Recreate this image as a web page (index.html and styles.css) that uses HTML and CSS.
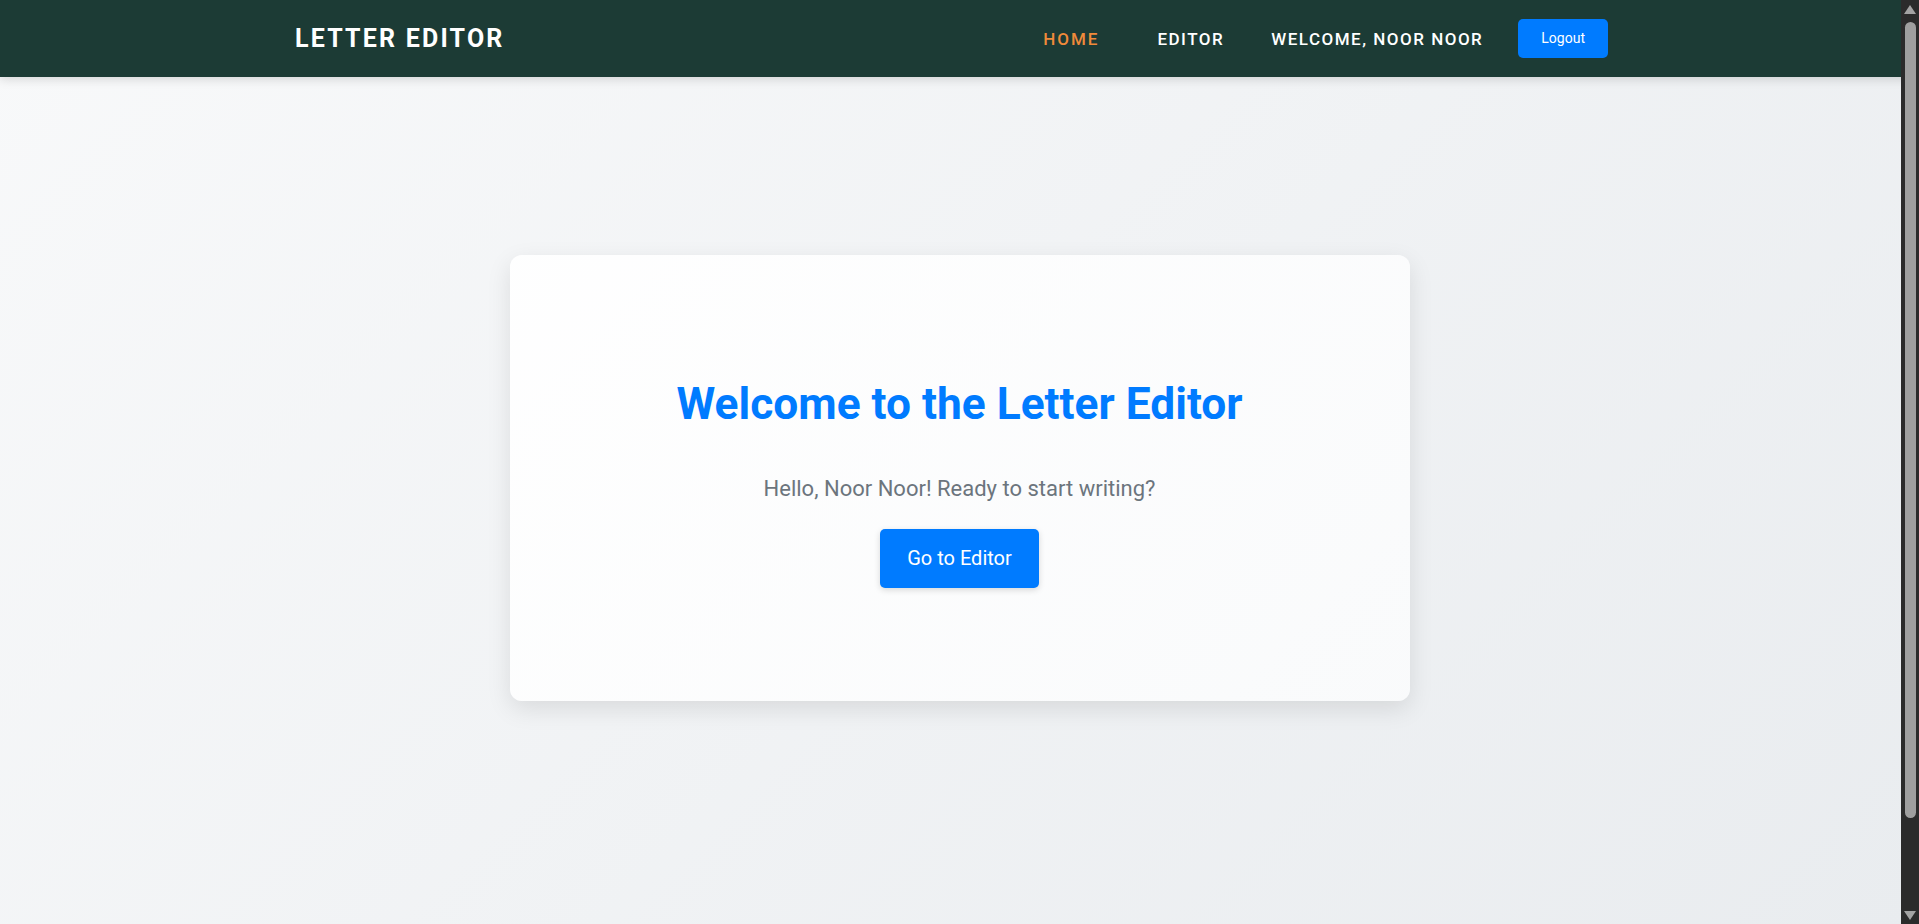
FILE: index.html
```html
<!DOCTYPE html>
<html lang="en">
<head>
<meta charset="utf-8">
<title>Letter Editor</title>
<link rel="stylesheet" href="styles.css">
</head>
<body>
<header class="navbar">
  <div class="nav-container">
    <a class="brand" href="#">LETTER EDITOR</a>
    <nav class="nav-links">
      <a class="nav-link active" href="#">HOME</a>
      <a class="nav-link" href="#">EDITOR</a>
      <span class="nav-welcome">WELCOME, NOOR NOOR</span>
      <button class="logout-btn" type="button">Logout</button>
    </nav>
  </div>
</header>
<main class="hero">
  <section class="card">
    <h1 class="card-title">Welcome to the Letter Editor</h1>
    <p class="card-text">Hello, Noor Noor! Ready to start writing?</p>
    <button class="primary-btn" type="button">Go to Editor</button>
  </section>
</main>
<div class="fake-scrollbar" aria-hidden="true">
  <span class="sb-arrow sb-up"></span>
  <span class="sb-thumb"></span>
  <span class="sb-arrow sb-down"></span>
</div>
</body>
</html>
```

FILE: styles.css
```css
html {
  background: #eef0f3;
}

body {
  margin: 0;
  font-family: Roboto, "Liberation Sans", Arial, sans-serif;
  background: linear-gradient(135deg, #f8f9fa 0%, #e9ecef 100%);
  min-height: 100vh;
  overflow: hidden;
}

.navbar {
  background: #1c3b35;
  height: 77px;
  padding-right: 18px;
  box-shadow: 0 2px 10px rgba(0, 0, 0, 0.15);
  position: relative;
  z-index: 2;
}

.nav-container {
  max-width: 1315px;
  height: 100%;
  margin: 0 auto;
  display: flex;
  align-items: center;
  justify-content: space-between;
}

.brand {
  color: #ffffff;
  text-decoration: none;
  font-size: 25px;
  font-weight: 700;
  letter-spacing: 2.2px;
  padding-left: 2px;
}

.nav-links {
  display: flex;
  align-items: center;
}

.nav-link,
.nav-welcome {
  color: #ffffff;
  text-decoration: none;
  font-size: 17px;
  font-weight: 500;
  letter-spacing: 1.5px;
}

.nav-link.active {
  color: #f08a3a;
  letter-spacing: 2px;
}

.nav-link + .nav-link {
  margin-left: 58px;
}

.nav-welcome {
  margin-left: 47px;
}

.logout-btn {
  margin-left: 35px;
  background: #007bff;
  color: #ffffff;
  border: none;
  border-radius: 5px;
  font-family: Roboto, "Liberation Sans", Arial, sans-serif;
  font-size: 14px;
  line-height: 17px;
  padding: 11px 23px;
  cursor: pointer;
}

.hero {
  padding-top: 178px;
  display: flex;
  justify-content: center;
}

.card {
  width: 900px;
  box-sizing: border-box;
  padding: 121px 40px 113px;
  background: linear-gradient(135deg, rgba(255, 255, 255, 0.95), rgba(250, 251, 252, 0.95));
  border-radius: 12px;
  box-shadow: 0 8px 24px rgba(0, 0, 0, 0.1);
  display: flex;
  flex-direction: column;
  align-items: center;
  text-align: center;
}

.card-title {
  margin: 0;
  color: #007bff;
  font-size: 44.3px;
  line-height: 57px;
  font-weight: 700;
}

.card-text {
  margin: 41px 0 0;
  color: #6c757d;
  font-size: 22px;
  line-height: 30px;
}

.primary-btn {
  margin-top: 25px;
  background: #007bff;
  color: #ffffff;
  border: none;
  border-radius: 5px;
  font-family: Roboto, "Liberation Sans", Arial, sans-serif;
  font-size: 20px;
  font-weight: 400;
  line-height: 23px;
  padding: 18px 27px;
  box-shadow: 0 2px 6px rgba(0, 0, 0, 0.15);
  cursor: pointer;
}

.fake-scrollbar {
  position: fixed;
  top: 0;
  right: 0;
  width: 18px;
  height: 100vh;
  background: #2b2b2b;
  z-index: 10;
}

.sb-arrow {
  position: absolute;
  left: 3px;
  width: 0;
  height: 0;
  border-left: 6.5px solid transparent;
  border-right: 6.5px solid transparent;
}

.sb-up {
  top: 5px;
  border-bottom: 9px solid #a3a3a3;
}

.sb-down {
  bottom: 4px;
  border-top: 9px solid #a3a3a3;
}

.sb-thumb {
  position: absolute;
  top: 22px;
  left: 4px;
  width: 11px;
  height: 796px;
  border-radius: 6px;
  background: #9f9f9f;
}
```
